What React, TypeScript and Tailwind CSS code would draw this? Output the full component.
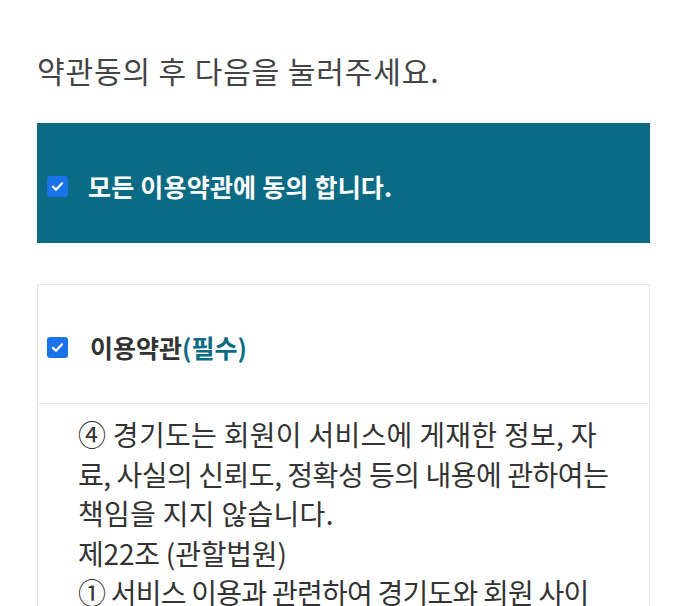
import React from "react";

const font = { fontFamily: '"Noto Sans CJK KR", "Noto Sans", sans-serif' };

function CheckBox() {
  return (
    <span className="flex h-[21px] w-[21px] shrink-0 items-center justify-center rounded-[3px] bg-[#1a73e8]">
      <svg viewBox="0 0 16 16" className="h-[15px] w-[15px]" fill="none">
        <path d="M3.2 8.4 6.4 11.4 12.8 4.6" stroke="#fff" strokeWidth="2.4" strokeLinecap="round" strokeLinejoin="round" />
      </svg>
    </span>
  );
}

// Terms text, one printed line each, with its own letter spacing
const lines = [
  { text: "④ 경기도는 회원이 서비스에 게재한 정보, 자", cls: "tracking-[0.3px]" },
  { text: "료, 사실의 신뢰도, 정확성 등의 내용에 관하여는", cls: "tracking-[-0.45px]" },
  { text: "책임을 지지 않습니다.", cls: "tracking-[0.3px]" },
  { text: "제22조 (관할법원)", cls: "tracking-[-0.2px]" },
  { text: "① 서비스 이용과 관련하여 경기도와 회원 사이", cls: "tracking-[-0.75px]" },
];

export default function App() {
  return (
    <div className="h-[606px] w-full overflow-hidden bg-white pl-[37px] pr-[33px]" style={font}>
      <p className="pt-[50px] text-[30px] leading-[40px] tracking-[0.9px] text-[#444]">
        약관동의 후 다음을 눌러주세요.
      </p>

      <label className="mt-[33px] flex h-[120px] items-center gap-[20px] bg-[#0b6a84] pl-[10px] pt-[6px]">
        <CheckBox />
        <span className="text-[25px] font-bold leading-none tracking-[0.2px] text-white">
          모든 이용약관에 동의 합니다.
        </span>
      </label>

      <div className="mt-[41px] border border-b-0 border-[#e6e6e6]">
        <div className="flex h-[119px] items-center gap-[22px] border-b border-[#e6e6e6] pl-[9px] pt-[6px]">
          <CheckBox />
          <span className="text-[25px] font-bold leading-none text-[#333]">
            이용약관<span className="text-[#0b6a84]">(필수)</span>
          </span>
        </div>
        <div className="pl-[40px] pt-[11px] text-[28px] leading-[39.5px] text-[#333]">
          {lines.map((l) => (
            <div key={l.text} className={`whitespace-nowrap ${l.cls}`}>
              {l.text}
            </div>
          ))}
        </div>
      </div>
    </div>
  );
}
